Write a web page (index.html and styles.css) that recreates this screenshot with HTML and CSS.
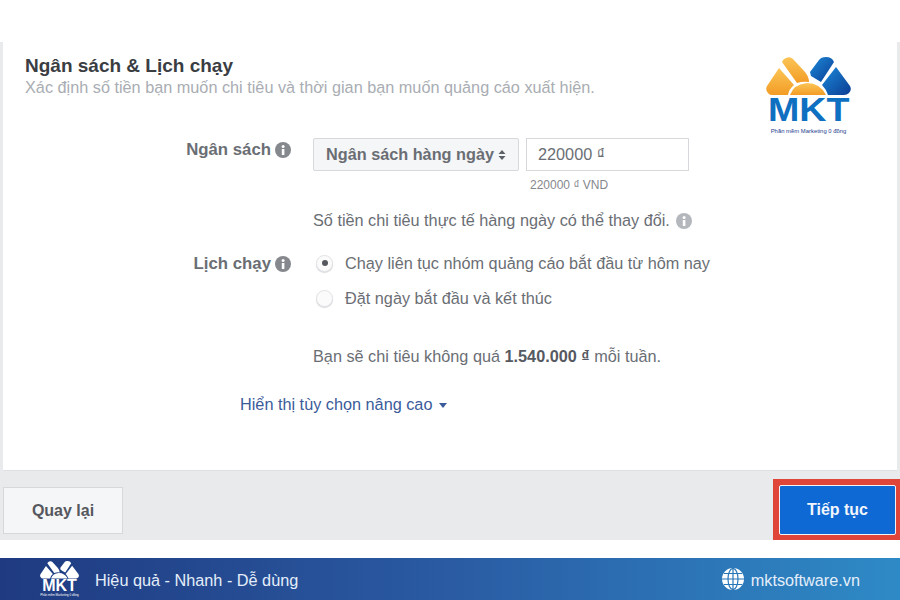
FILE: index.html
```html
<!DOCTYPE html>
<html lang="vi">
<head>
    <meta charset="UTF-8">
    <meta name="viewport" content="width=device-width, initial-scale=1.0">
    <title>Ngân sách &amp; Lịch chạy</title>
    <link rel="stylesheet" href="styles.css">
</head>
<body>
    <main class="panel">
        <section class="card">
            <h1 class="card-title">Ngân sách &amp; Lịch chạy</h1>
            <p class="card-sub">Xác định số tiền bạn muốn chi tiêu và thời gian bạn muốn quảng cáo xuất hiện.</p>

            <!-- logo goc phai -->
            <div class="logo">
                <svg class="logo-mark" viewBox="0 0 85 39" width="85" height="39">
                    <defs>
                        <linearGradient id="cam" x1="0" y1="0" x2="0" y2="1">
                            <stop offset="0" stop-color="#fbc556"/>
                            <stop offset="1" stop-color="#f39c25"/>
                        </linearGradient>
                        <linearGradient id="xanh" x1="0" y1="0" x2="1" y2="1">
                            <stop offset="0" stop-color="#1c8ad9"/>
                            <stop offset="1" stop-color="#0b3d94"/>
                        </linearGradient>
                    </defs>
                    <path d="M13 11 L1 29 Q-1 33 2 36 Q3 38 6 38 L22 38 Q23 32 28 28Z" fill="url(#cam)"/>
                    <path d="M16 5 Q17 2 20 1 Q24 -1 27 2 L39 15 Q43 20 43 25 Q37 24 31 26Z" fill="url(#cam)"/>
                    <path d="M24 38 Q28 27 41 26 Q54 26 60 38Z" fill="url(#cam)"/>
                    <path d="M44 15 L53 3 Q55 0 60 0 Q66 0 68 5 L55 25 Q50 22 45 19Z" fill="url(#xanh)"/>
                    <path d="M70 10 L84 29 Q86 33 83 36 Q81 38 78 38 L62 38 Q60 32 56 28Z" fill="url(#xanh)"/>
                </svg>
                <div class="logo-name">MKT</div>
                <div class="logo-slogan">Phần mềm Marketing 0 đồng</div>
            </div>

            <div class="form-row row-budget">
                <div class="form-label">Ngân sách
                    <svg class="info" viewBox="0 0 16 16" width="16" height="16"><circle cx="8" cy="8" r="8"/><rect x="6.8" y="7" width="2.6" height="6" fill="#fff"/><circle cx="8.1" cy="4.6" r="1.5" fill="#fff"/></svg>
                </div>
                <div class="form-field">
                    <div class="budget-controls">
                        <div class="select">Ngân sách hàng ngày
                            <svg class="select-arrows" viewBox="0 0 8 10" width="8" height="10"><path d="M4 0 L7.5 4 H0.5Z M4 10 L0.5 6 H7.5Z"/></svg>
                        </div>
                        <div class="amount-input">220000 ₫</div>
                    </div>
                    <div class="amount-hint">220000 ₫ VND</div>
                    <p class="note">Số tiền chi tiêu thực tế hàng ngày có thể thay đổi.
                        <svg class="info info-light" viewBox="0 0 16 16" width="16" height="16"><circle cx="8" cy="8" r="8"/><rect x="6.8" y="7" width="2.6" height="6" fill="#fff"/><circle cx="8.1" cy="4.6" r="1.5" fill="#fff"/></svg>
                    </p>
                </div>
            </div>

            <div class="form-row row-schedule">
                <div class="form-label">Lịch chạy
                    <svg class="info" viewBox="0 0 16 16" width="16" height="16"><circle cx="8" cy="8" r="8"/><rect x="6.8" y="7" width="2.6" height="6" fill="#fff"/><circle cx="8.1" cy="4.6" r="1.5" fill="#fff"/></svg>
                </div>
                <div class="form-field">
                    <div class="radio-row"><span class="radio radio-on"></span>Chạy liên tục nhóm quảng cáo bắt đầu từ hôm nay</div>
                    <div class="radio-row"><span class="radio"></span>Đặt ngày bắt đầu và kết thúc</div>
                    <p class="weekly">Bạn sẽ chi tiêu không quá <b>1.540.000 ₫</b> mỗi tuần.</p>
                </div>
            </div>

            <a href="#" class="advanced">Hiển thị tùy chọn nâng cao <span class="caret"></span></a>
        </section>

        <footer class="actions">
            <button type="button" class="btn-back">Quay lại</button>
            <div class="next-frame">
                <button type="button" class="btn-next">Tiếp tục</button>
            </div>
        </footer>
    </main>

    <div class="banner">
        <div class="banner-left">
            <div class="mini-logo">
                <svg viewBox="0 0 85 39" width="39" height="18">
                    <path d="M13 11 L1 29 Q-1 33 2 36 Q3 38 6 38 L22 38 Q23 32 28 28Z M16 5 Q17 2 20 1 Q24 -1 27 2 L39 15 Q43 20 43 25 Q37 24 31 26Z M24 38 Q28 27 41 26 Q54 26 60 38Z M44 15 L53 3 Q55 0 60 0 Q66 0 68 5 L55 25 Q50 22 45 19Z M70 10 L84 29 Q86 33 83 36 Q81 38 78 38 L62 38 Q60 32 56 28Z" fill="#fff"/>
                </svg>
                <div class="mini-name">MKT</div>
                <div class="mini-slogan">Phần mềm Marketing 0 đồng</div>
            </div>
            <span class="banner-text">Hiệu quả - Nhanh - Dễ dùng</span>
        </div>
        <div class="banner-right">
            <svg class="globe" viewBox="0 0 22 22" width="22" height="22">
                <circle cx="11" cy="11" r="11" fill="#fff"/>
                <g fill="none" stroke="#2a77b8" stroke-width="1.2">
                    <ellipse cx="11" cy="11" rx="5" ry="10.5"/>
                    <path d="M11 0V22M0 11H22M2 5.5H20M2 16.500H20"/>
                </g>
            </svg>
            <span class="banner-text">mktsoftware.vn</span>
        </div>
    </div>
</body>
</html>
```

FILE: styles.css
```css
:root {
    --nen-xam: #e9eaec;
    --chu-dam: #3a3d42;
    --chu-nhan: #6a6e74;
    --chu-phu: #a9adb3;
    --xanh-nut: #0f69d4;
    --do-khung: #e0453a;
    --vien: #d6d8dc;
}

* {
    box-sizing: border-box;
}

body {
    margin: 0;
    height: 600px;
    overflow: hidden;
    background-color: #fff;
    font-family: "Liberation Sans", Arial, sans-serif;
    display: flex;
    flex-direction: column;
}

.panel {
    margin-top: 42px;
    height: 498px;
    padding: 0 3px;
    background-color: var(--nen-xam);
    display: flex;
    flex-direction: column;
}

.card {
    position: relative;
    height: 429px;
    padding: 14px 22px 0;
    background-color: #fff;
    border-bottom: 1px solid #dfe0e3;
}

.card-title {
    margin: 0;
    font-size: 19px;
    line-height: 20px;
    color: var(--chu-dam);
}

.card-sub {
    margin: 1px 0 0;
    font-size: 16.25px;
    line-height: 20px;
    color: var(--chu-phu);
}

.logo {
    position: absolute;
    top: 15px;
    right: 46px;
    width: 85px;
    display: flex;
    flex-direction: column;
    align-items: center;
}

.logo-mark {
    display: block;
}

.logo-name {
    margin-top: 1px;
    font-size: 33px;
    line-height: 26px;
    font-weight: bold;
    color: #0f6fc0;
    transform: scaleX(1.14);
}

.logo-slogan {
    margin-top: 5px;
    font-size: 5.9px;
    line-height: 7px;
    white-space: nowrap;
    color: #25408f;
}

.form-row {
    display: grid;
    grid-template-columns: 266px 1fr;
    column-gap: 22px;
}

.row-budget {
    margin-top: 42px;
}

.row-schedule {
    margin-top: 23px;
}

.form-label {
    display: flex;
    justify-content: flex-end;
    align-items: center;
    align-self: start;
    gap: 4px;
    height: 20px;
    margin-top: 1px;
    font-size: 16.8px;
    font-weight: bold;
    color: var(--chu-nhan);
}

.info {
    flex: none;
    fill: #85888d;
}

.info-light {
    fill: #b4b7bb;
    vertical-align: -3px;
    margin-left: 2px;
}

.budget-controls {
    display: flex;
    gap: 7px;
    margin-top: -1px;
}

.select {
    display: flex;
    align-items: center;
    gap: 4px;
    width: 206px;
    height: 33px;
    padding: 0 0 0 12px;
    background-color: #f5f6f7;
    border: 1px solid var(--vien);
    border-radius: 2px;
    font-size: 16.25px;
    font-weight: bold;
    white-space: nowrap;
    color: var(--chu-nhan);
}

.select-arrows {
    flex: none;
    fill: #5d6066;
}

.amount-input {
    width: 163px;
    height: 33px;
    padding: 0 11px;
    border: 1px solid var(--vien);
    font-size: 16.25px;
    line-height: 31px;
    color: var(--chu-nhan);
}

.amount-hint {
    margin: 7px 0 0 217px;
    font-size: 12px;
    line-height: 14px;
    color: #85888d;
}

.note {
    margin: 18px 0 0;
    font-size: 16.25px;
    line-height: 20px;
    color: var(--chu-nhan);
}

.radio-row {
    display: flex;
    align-items: center;
    gap: 12px;
    height: 20px;
    font-size: 16.25px;
    color: var(--chu-nhan);
}

.radio-row + .radio-row {
    margin-top: 15px;
}

.radio {
    flex: none;
    display: flex;
    align-items: center;
    justify-content: center;
    width: 17px;
    height: 17px;
    margin-left: 3px;
    border: 1px solid #e2e3e6;
    border-radius: 50%;
    background-color: #fbfbfc;
    box-shadow: 0 1px 1px #d8d9dc;
}

.radio-on::after {
    content: "";
    width: 6px;
    height: 6px;
    border-radius: 50%;
    background-color: #55585e;
}

.weekly {
    margin: 38px 0 0;
    font-size: 16.25px;
    line-height: 20px;
    color: var(--chu-nhan);
}

.weekly b {
    color: #56595f;
}

.advanced {
    display: inline-block;
    margin: 28px 0 0 215px;
    font-size: 16.25px;
    line-height: 20px;
    text-decoration: none;
    color: #3b5b9a;
}

.caret {
    display: inline-block;
    margin-left: 2px;
    vertical-align: 2px;
    border-top: 5px solid #3b5b9a;
    border-left: 4.500px solid transparent;
    border-right: 4.500px solid transparent;
}

.actions {
    flex: 1;
    display: flex;
    align-items: flex-end;
    justify-content: space-between;
}

.btn-back {
    width: 120px;
    height: 47px;
    margin-bottom: 6px;
    background-color: #f5f6f7;
    border: 1px solid var(--vien);
    font-family: inherit;
    font-size: 16px;
    font-weight: bold;
    color: #55585e;
}

.next-frame {
    margin-right: -3px;
    width: 127px;
    height: 61px;
    padding: 6px 4px 5px 6px;
    background-color: var(--do-khung);
}

.btn-next {
    display: block;
    width: 100%;
    height: 100%;
    padding: 0;
    background-color: var(--xanh-nut);
    border: 1px solid #f1f3f6;
    border-radius: 2px;
    font-family: inherit;
    font-size: 16px;
    font-weight: bold;
    color: #f2f6fc;
}

.banner {
    margin-top: 18px;
    height: 42px;
    padding: 0 40px;
    display: flex;
    align-items: center;
    justify-content: space-between;
    background: linear-gradient(90deg, #1f3a80 0%, #2a5ba3 50%, #2e8ac6 100%);
    color: #e4eefa;
}

.banner-text {
    font-size: 16.25px;
    padding-top: 2px;
}

.banner-left {
    display: flex;
    align-items: center;
    gap: 16px;
}

.banner-right {
    display: flex;
    align-items: center;
    gap: 7px;
}

.mini-logo {
    width: 39px;
    color: #fff;
    display: flex;
    flex-direction: column;
    align-items: center;
}

.mini-logo svg {
    display: block;
}

.mini-name {
    margin-top: 1px;
    font-size: 16px;
    line-height: 12px;
    font-weight: bold;
}

.mini-slogan {
    margin-top: 1px;
    font-size: 3px;
    line-height: 4px;
    white-space: nowrap;
}
```
